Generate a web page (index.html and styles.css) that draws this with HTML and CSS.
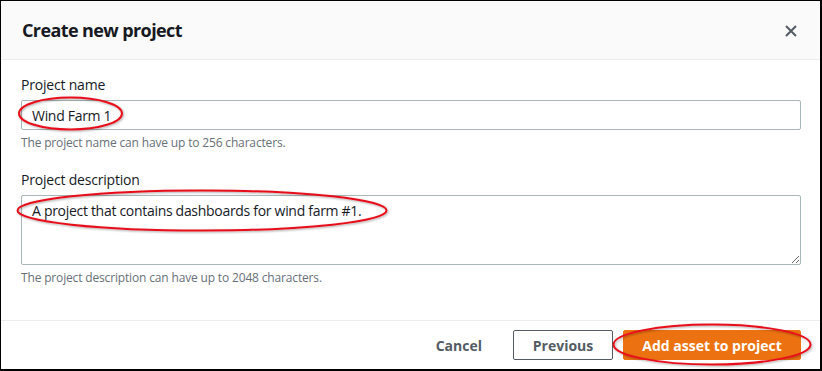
FILE: index.html
```html
<!DOCTYPE html>
<html lang="en">
<head>
    <meta charset="UTF-8">
    <title>Create new project</title>
    <link rel="stylesheet" href="styles.css">
</head>
<body>
    <div class="modal">
        <div class="modal-header">
            <h2 class="modal-title">Create new project</h2>
            <button class="close" aria-label="Close">
                <svg width="12" height="12" viewBox="0 0 12 12">
                    <path d="M1 1 L11 11 M11 1 L1 11" stroke="#545b64" stroke-width="2" fill="none"/>
                </svg>
            </button>
        </div>

        <div class="modal-body">
            <div class="field">
                <label class="label" for="name">Project name</label>
                <input id="name" class="input" type="text" value="Wind Farm 1">
                <div class="help">The project name can have up to 256 characters.</div>
            </div>
            <div class="field">
                <label class="label" for="desc">Project description</label>
                <textarea id="desc" class="textarea">A project that contains dashboards for wind farm #1.</textarea>
                <div class="help">The project description can have up to 2048 characters.</div>
            </div>
        </div>

        <div class="modal-footer">
            <button class="btn btn-link">Cancel</button>
            <button class="btn btn-normal">Previous</button>
            <button class="btn btn-primary">Add asset to project</button>
        </div>

        <!-- annotation marks drawn over the screenshot -->
        <svg class="marks" width="822" height="371" viewBox="0 0 822 371">
            <defs>
                <filter id="shade" x="-10%" y="-30%" width="120%" height="160%">
                    <feDropShadow dx="1" dy="1" stdDeviation="1" flood-color="#000" flood-opacity="0.35"/>
                </filter>
            </defs>
            <g fill="none" stroke="#e8101a" stroke-width="2" filter="url(#shade)">
                <ellipse cx="70.5" cy="113.5" rx="51.5" ry="16"/>
                <ellipse cx="202" cy="210.5" rx="184.5" ry="20"/>
                <ellipse cx="712" cy="344.5" rx="98.5" ry="20"/>
            </g>
        </svg>
    </div>
</body>
</html>
```

FILE: styles.css
```css
body {
    margin: 0;
    font-family: "Open Sans", "Noto Sans", sans-serif;
    color: #16191f;
    background: #fff;
}
.modal {
    position: relative;
    width: 822px;
    height: 371px;
    box-sizing: border-box;
    border-style: solid;
    border-color: #000;
    border-width: 1px 2px 2px 1px;
    display: flex;
    flex-direction: column;
    background: #fff;
}
.modal-header {
    height: 58px;
    background: #fafafa;
    border-bottom: 1px solid #eaeded;
    display: flex;
    align-items: center;
    justify-content: space-between;
    padding: 0 23px 0 21px;
}
.modal-title {
    margin: 0;
    font-size: 18px;
    font-weight: 700;
    line-height: 22px;
    letter-spacing: -0.6px;
}
.close {
    background: none;
    border: none;
    padding: 0;
    width: 12px;
    height: 12px;
    display: flex;
    margin-top: 1px;
    cursor: pointer;
}
.modal-body {
    flex: 1;
    padding: 14px 19px 0 20px;
}
.field {
    display: flex;
    flex-direction: column;
    margin-bottom: 18px;
}
.label {
    font-size: 14px;
    line-height: 22px;
    margin-bottom: 4px;
    letter-spacing: -0.2px;
}
.input,
.textarea {
    font-family: inherit;
    font-size: 14px;
    letter-spacing: -0.3px;
    color: #16191f;
    border: 1px solid #aab7b8;
    border-radius: 2px;
    padding: 0 10px;
    margin: 0;
    box-sizing: border-box;
    width: 780px;
    outline: none;
}
.input {
    height: 30px;
    line-height: 22px;
}
.textarea {
    height: 70px;
    line-height: 22px;
    padding-top: 4px;
    resize: both;
}
.help {
    font-size: 12px;
    line-height: 16px;
    letter-spacing: -0.16px;
    color: #687078;
    margin-top: 5px;
}
.modal-footer {
    border-top: 1px solid #eaeded;
    padding: 9px 19px 9px 20px;
    display: flex;
    justify-content: flex-end;
    align-items: center;
    gap: 10px;
}
.btn {
    font-family: inherit;
    font-size: 14px;
    font-weight: 700;
    height: 30px;
    box-sizing: border-box;
    border-radius: 2px;
    padding: 0 20px;
    cursor: pointer;
}
.btn-link {
    background: none;
    border: 1px solid transparent;
    color: #545b64;
}
.btn-normal {
    background: #fff;
    border: 1px solid #545b64;
    color: #545b64;
    width: 100px;
    padding: 0;
}
.btn-primary {
    background: #ec7211;
    border: 1px solid #ec7211;
    color: #fff;
    width: 178px;
    padding: 0;
}
.marks {
    position: absolute;
    top: -1px;
    left: -1px;
    pointer-events: none;
}
```
